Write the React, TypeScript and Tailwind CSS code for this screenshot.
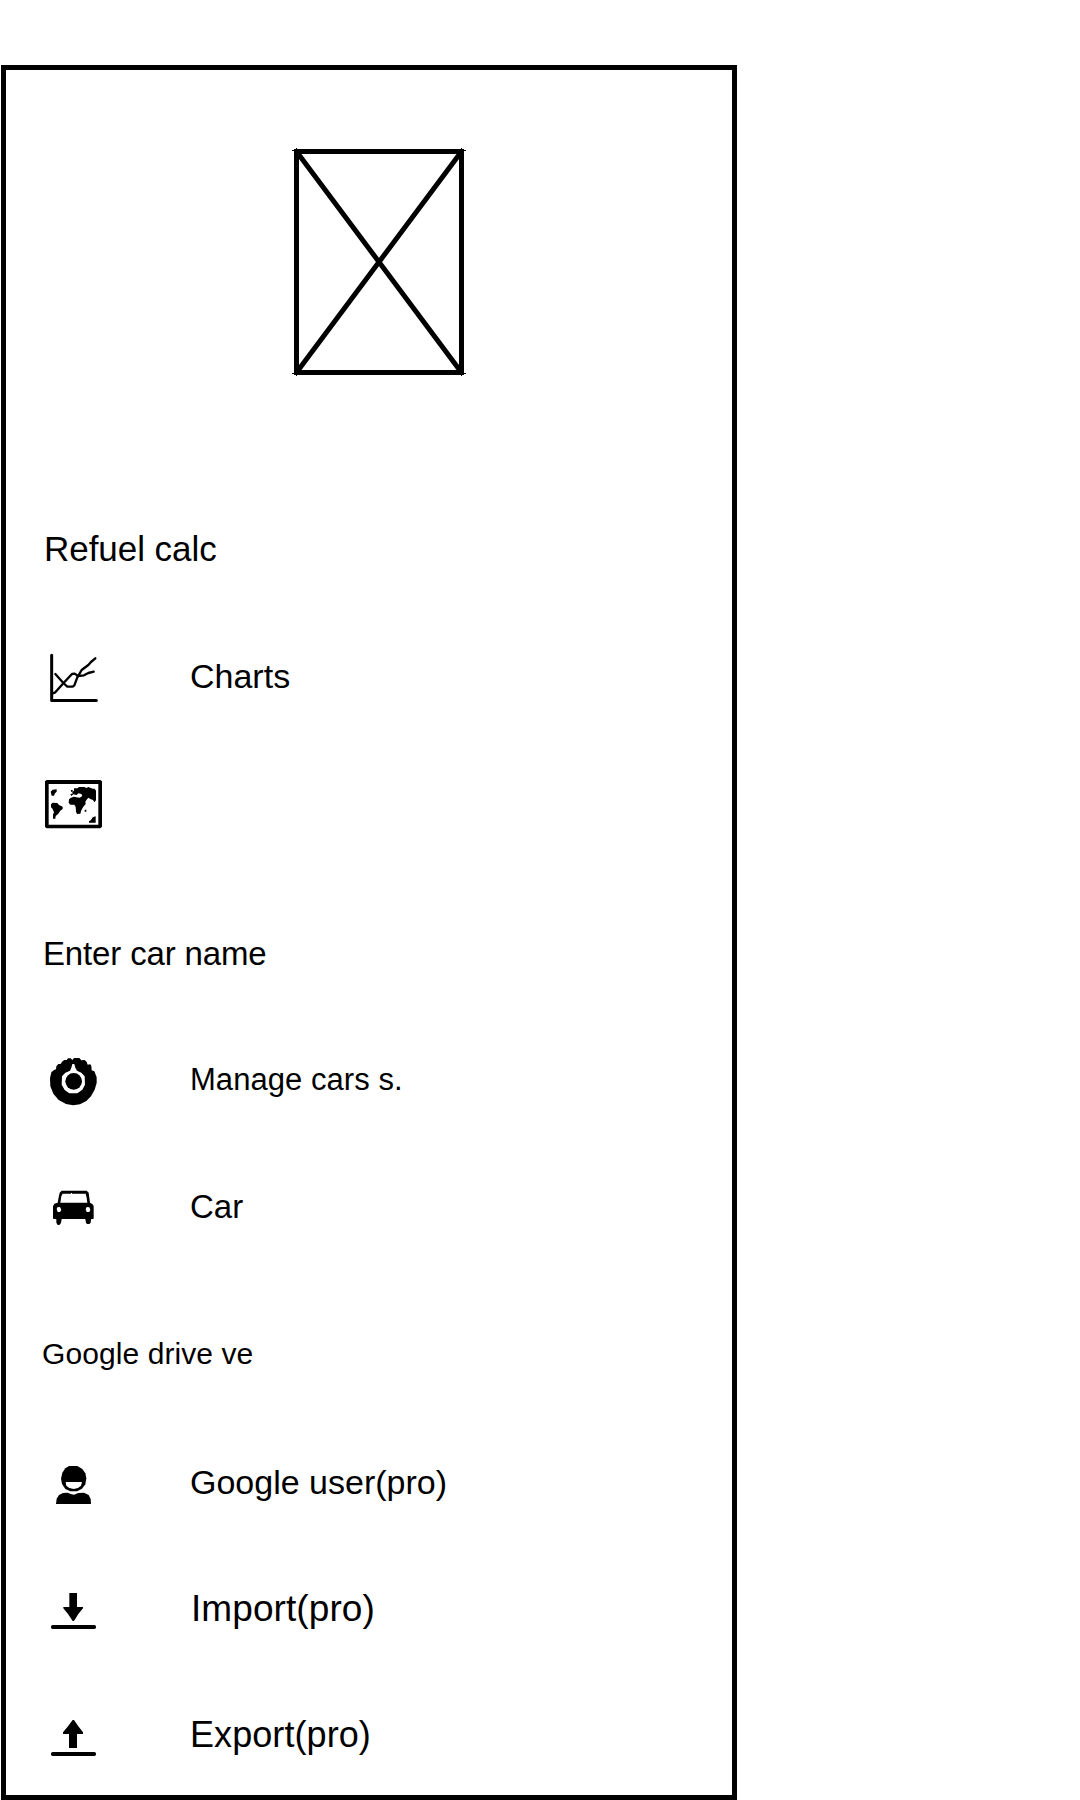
import type { ReactNode } from "react";

function Glyph({ top = 0, children }: { top?: number; children: ReactNode }) {
  return (
    <svg
      className="h-[70px] w-[70px] shrink-0"
      viewBox={`0 ${top} 210 210`}
      fill="black"
      aria-hidden="true"
    >
      {children}
    </svg>
  );
}

function ChartIcon() {
  return (
    <Glyph top={6}>
      <g fill="none" stroke="black" strokeLinecap="round" strokeLinejoin="round">
        <path d="M35 46V181.5H169" strokeWidth="9" />
        <path d="M38 160L46 157L70 130L96 102L104 101L114 108L132 106L145 99L161 95" strokeWidth="7" />
        <path d="M46 102L70 129L82 140H98L103 136L112 112L125 90L145 75L153 66L166 55" strokeWidth="7" />
      </g>
    </Glyph>
  );
}

function MapIcon() {
  return (
    <Glyph>
      <path fillRule="evenodd" d="M20 30H181L186 34V170L181 175H20L15 171V34ZM26 42V164H175V42Z" />
      <path d="M32 65L38 59L50 58V65L45 70L42 77H35Z" />
      <path d="M33 103L38 98L52 99L57 105L68 110V117L61 122L55 131L47 138L46 146H39V134L42 127L38 117L33 112Z" />
      <path d="M96 66L102 62V55H112L117 51H133L139 54L145 51L158 56H164L168 62V91L163 97L159 90L151 87L145 83L141 88L136 95L137 102L130 110L124 121L121 131L111 132L108 125L107 111L103 104H91L86 98L87 88L93 83L102 80L109 82L119 83L127 78L124 72L115 70L110 75L100 73L94 78L91 73L99 70Z" />
      <path d="M93 60H98V65H93ZM134 119H139V125H134ZM147 154L153 150L158 142L167 139V158H147Z" />
    </Glyph>
  );
}

function TyreIcon() {
  return (
    <Glyph top={-3}>
      <path d="M97 45L102 39H118L124 46L134 45L140 51L143 59L151 58L154 63L155 76L163 79L170 97V114L164 134L153 154L139 168L120 178L100 181L78 177L56 165L40 146L31 124L30 100L34 82L42 75L48 73L49 64L55 57H62L66 50L73 45H80L84 40H92Z" />
      <path d="M97 57H103L106 68L111 77L124 83L134 94L135 119L127 134L112 145H88L74 135L65 119L66 94L76 83L90 77L94 68Z" fill="white" />
      <circle cx="101" cy="109" r="25" />
    </Glyph>
  );
}

function CarIcon() {
  return (
    <Glyph top={-12}>
      <path
        fillRule="evenodd"
        d="M65 47H140L146 53L148 68L150 83L157 87L161 93V131L153 133L152 143L148 147H141L138 143L136 132H65L63 144L58 150H53L49 143V133L39 131V94L43 86L53 83L56 67L59 53ZM68 56L64 64L61 83H142L140 68L137 56ZM52 97L50 102L53 111H60L64 105L60 96ZM140 96L137 103L140 111H148L151 104L148 97Z"
      />
      <path d="M93 54h3v3h-3z" fill="white" />
    </Glyph>
  );
}

function UserIcon() {
  return (
    <Glyph top={-12}>
      <path d="M87 48H112L127 57L136 70L139 85L136 103L126 116L111 124H91L76 117L66 102L63 86L67 68L76 55Z" />
      <path d="M77 96H126L123 107L114 114L101 117L88 114L79 107Z" fill="white" />
      <path d="M48 162L50 146L57 135L69 129L83 128L92 132L102 134L115 129L132 128L146 135L152 147L153 162Z" />
    </Glyph>
  );
}

function ImportIcon() {
  return (
    <Glyph top={-21}>
      <path d="M88 39H111V81H129V85L115 102L102 123H98L84 102L70 85V81H88Z" />
      <rect x="33" y="135" width="135" height="12" rx="5" />
    </Glyph>
  );
}

function ExportIcon() {
  return (
    <Glyph top={-18}>
      <path d="M98 45H102L115 64L129 82V87H111V129H87V87H69V82L84 64Z" />
      <rect x="33" y="141" width="135" height="12" rx="5" />
    </Glyph>
  );
}

function Row({ className, icon, text = "", textClass = "" }: { className: string; icon: ReactNode; text?: string; textClass?: string }) {
  return (
    <li className={`flex h-[70px] items-center gap-20 pl-[34px] ${className}`}>
      {icon}
      {text && <span className={`whitespace-nowrap ${textClass}`}>{text}</span>}
    </li>
  );
}

export default function App() {
  return (
    <div className="h-[1800px] w-full overflow-hidden bg-white pt-[65px] pl-px font-['Liberation_Sans',Arial,sans-serif] text-black">
      <nav className="flex h-[1735px] w-[736px] flex-col border-[5px] border-black">
        <svg className="mt-[78px] ml-[286px] h-[228px] w-[174px] shrink-0" viewBox="0 0 174 228" fill="none" stroke="black" strokeWidth="5">
          <rect x="4.5" y="3.5" width="165" height="221" />
          <path d="M4.5 3.5L169.5 224.5M169.5 3.5L4.5 224.5" strokeWidth="5" />
          <path d="M0 2.5H7M4.5 0V6M167 2.5H174M169.5 0V6M0 225.5H7M4.5 222V228M167 225.5H174M169.5 222V228" strokeWidth="1" />
        </svg>

        <h2 className="mt-[153px] ml-[38px] h-10 text-[35px] leading-10 tracking-[-0.05px]">Refuel calc</h2>
        <ul>
          <Row className="mt-[73px]" icon={<ChartIcon />} text="Charts" textClass="pb-0.5 text-[34px]" />
          <Row className="mt-[58px]" icon={<MapIcon />} />
        </ul>

        <h2 className="mt-[94px] ml-[37px] h-10 text-[33px] leading-10 tracking-[-0.15px]">Enter car name</h2>
        <ul>
          <Row className="mt-[70px]" icon={<TyreIcon />} text="Manage cars s." textClass="pt-0.5 text-[31px] tracking-[0.05px]" />
          <Row className="mt-[57px]" icon={<CarIcon />} text="Car" textClass="pt-0.5 text-[33px]" />
        </ul>

        <h2 className="mt-[93px] ml-[36px] h-10 text-[30px] leading-10 tracking-[0.08px]">Google drive ve</h2>
        <ul>
          <Row className="mt-[72px]" icon={<UserIcon />} text="Google user(pro)" textClass="pt-0.5 text-[34px]" />
          <Row className="mt-[57px]" icon={<ImportIcon />} text="Import(pro)" textClass="ml-px pt-0.5 text-[37px] tracking-[0.08px]" />
          <Row className="mt-[56px]" icon={<ExportIcon />} text="Export(pro)" textClass="pt-0.5 text-[36px] tracking-[0.08px]" />
        </ul>
      </nav>
    </div>
  );
}
